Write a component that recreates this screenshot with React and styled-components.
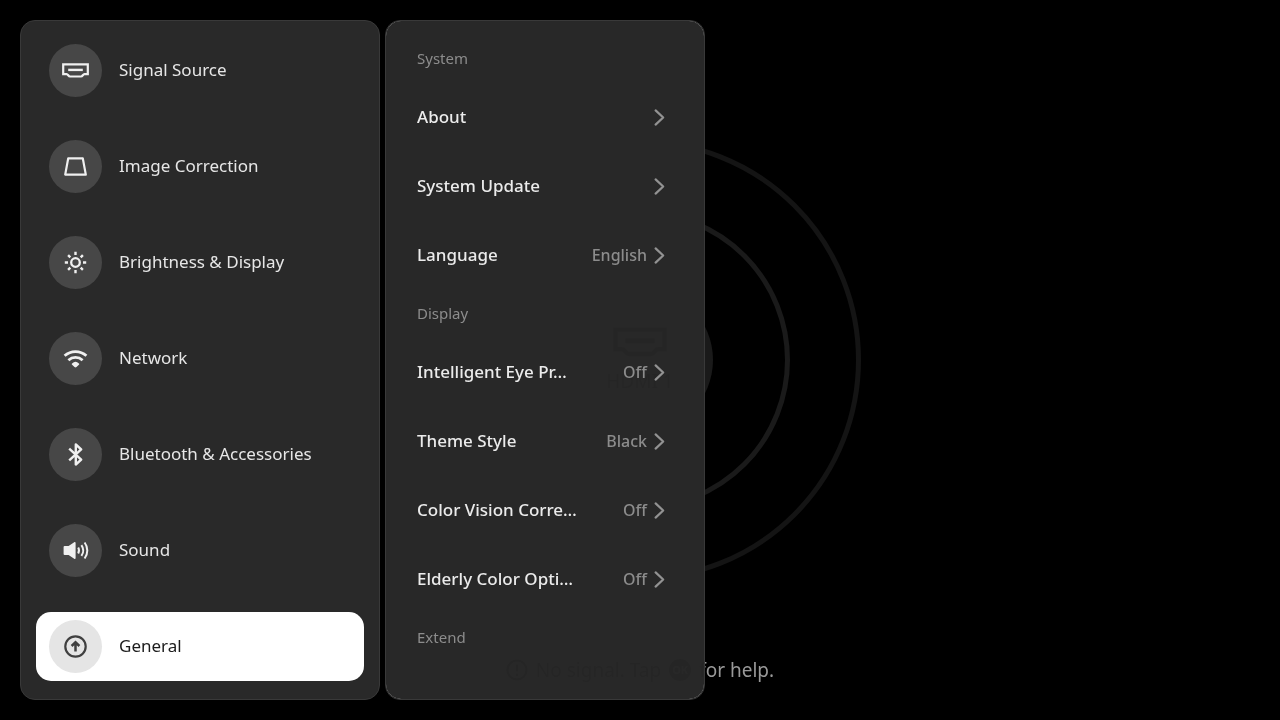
import React, { useState } from "react";
import styled, { createGlobalStyle } from "styled-components";

const GlobalStyle = createGlobalStyle`
  * {
    box-sizing: border-box;
  }
  body {
    margin: 0;
    background: #000;
    font-family: "Noto Sans", "Open Sans", sans-serif;
  }
  button {
    font: inherit;
    border: none;
    padding: 0;
    cursor: pointer;
  }
`;

const Screen = styled.div`
  position: relative;
  min-height: 100vh;
  overflow: hidden;
  background: #000;
`;

/* idle screen behind the settings panels */
const Backdrop = styled.div`
  position: absolute;
  inset: 0;
  display: grid;
  place-items: center;

  > * {
    grid-area: 1 / 1;
  }
`;

const Ring = styled.div`
  width: ${(p) => p.$size}px;
  height: ${(p) => p.$size}px;
  border: 5px solid ${(p) => p.$color};
  border-radius: 50%;
`;

const SourceBadge = styled.div`
  width: 146px;
  height: 146px;
  border-radius: 50%;
  background: #1a1a1a;
  color: #888;
  display: flex;
  flex-direction: column;
  align-items: center;
  justify-content: center;
  gap: 12px;
  font-size: 19px;
  line-height: 24px;
`;

const Hint = styled.p`
  align-self: end;
  display: flex;
  align-items: center;
  gap: 8px;
  margin: 0;
  padding-bottom: 36px;
  font-size: 19px;
  line-height: 28px;
  color: #999;
`;

const OkKey = styled.span`
  width: 22px;
  height: 22px;
  border-radius: 50%;
  background: #999;
  color: #000;
  font-size: 11px;
  font-weight: 700;
  line-height: 22px;
  text-align: center;
`;

const Panels = styled.div`
  position: relative;
  display: flex;
  gap: 5px;
  min-height: 100vh;
  padding: 20px;
`;

const Sidebar = styled.nav`
  flex: 0 1 360px;
  display: flex;
  flex-direction: column;
  gap: 27px;
  padding: 15px 15px 18px;
  background: #292929;
  border: 1px solid #393939;
  border-radius: 15px;
`;

const NavItem = styled.button`
  display: flex;
  align-items: center;
  gap: 17px;
  height: 69px;
  padding: 0 13px;
  border-radius: 15px;
  font-size: 17px;
  text-align: left;
  color: ${(p) => (p.$active ? "#1c1c1c" : "#e6e6e6")};
  background: ${(p) => (p.$active ? "#fff" : "transparent")};
`;

const NavIcon = styled.span`
  display: flex;
  align-items: center;
  justify-content: center;
  flex: none;
  width: 53px;
  height: 53px;
  border-radius: 50%;
  color: ${(p) => (p.$active ? "#404040" : "#f0f0f0")};
  background: ${(p) => (p.$active ? "#e5e5e5" : "#474747")};
`;

const NavLabel = styled.span`
  padding-bottom: 2px;
`;

/* the glass sits just inside the outline so its edge never shows */
const Details = styled.main`
  position: relative;
  z-index: 0;
  flex: 0 1 320px;
  padding: 15px 40px 15px 32px;

  &::before,
  &::after {
    content: "";
    position: absolute;
    z-index: -1;
    border-radius: 15px;
  }
  &::before {
    inset: 1px;
    background: rgba(36, 36, 36, 0.98);
    backdrop-filter: invert(1);
  }
  &::after {
    inset: 0;
    border: 1px solid #393939;
  }
`;

const GroupTitle = styled.h2`
  margin: 0;
  padding-bottom: 2px;
  font-size: 15px;
  font-weight: 400;
  line-height: 46px;
  color: #8c8c8c;
`;

const Row = styled.button`
  display: flex;
  align-items: center;
  width: 100%;
  height: 69px;
  background: transparent;
  text-align: left;
`;

const RowLabel = styled.span`
  flex: 1;
  padding-bottom: 2px;
  white-space: nowrap;
  font-size: 17px;
  font-weight: 500;
  color: #ebebeb;
`;

const RowValue = styled.span`
  margin-right: 6px;
  padding-bottom: 1px;
  font-size: 16px;
  font-weight: 500;
  color: #8c8c8c;
`;

const Svg = ({ w, h, children, scale = 1 }) => (
  <svg
    width={w * scale}
    height={h * scale}
    viewBox={`0 0 ${w} ${h}`}
    fill="none"
    stroke="currentColor"
    strokeWidth="2.2"
    aria-hidden="true"
  >
    {children}
  </svg>
);

const HdmiIcon = ({ scale }) => (
  <Svg w={27} h={15} scale={scale}>
    <path d="M1.2 1.3h24.6v9.8h-3.4c-1.6 0-1.6 2.4-3.4 2.4H8c-1.8 0-1.8-2.4-3.4-2.4H1.2z" />
    <path d="M6.2 6.9h14.6" strokeWidth="2.4" />
  </Svg>
);

const KeystoneIcon = () => (
  <Svg w={23} h={19}>
    <path d="M4.2 1.4h14.6l3 16.2H1.2z" strokeLinejoin="round" />
  </Svg>
);

const SunIcon = () => (
  <Svg w={23} h={23}>
    <circle cx="11.5" cy="11.5" r="4.3" strokeWidth="2.3" />
    <path d="M11.5.8v3.2M11.5 19v3.2M.8 11.5h3.2M19 11.5h3.2" strokeWidth="2.4" />
    <path d="M4.1 4.1l2.2 2.2M16.7 16.7l2.2 2.2M4.1 18.9l2.2-2.2M16.7 6.3l2.2-2.2" strokeWidth="2.4" />
  </Svg>
);

const WifiIcon = () => (
  <Svg w={25} h={19}>
    <path d="M1.6 6.8a16.4 16.4 0 0 1 21.8 0" strokeWidth="2.8" />
    <path d="M5.4 11.2a10.6 10.6 0 0 1 14.2 0" strokeWidth="2.8" />
    <path d="M9.1 14.4a5 5 0 0 1 6.8 0c.5.5.4 1 0 1.4l-2.4 2.2a1.5 1.5 0 0 1-2 0l-2.4-2.2c-.4-.4-.5-.9 0-1.4z" fill="currentColor" stroke="none" />
  </Svg>
);

const BluetoothIcon = () => (
  <Svg w={15} h={25}>
    <path d="M1.2 6.6l12 11-5.4 4.9v-20l5.4 4.9-12 11" strokeWidth="2.4" strokeLinejoin="round" />
  </Svg>
);

const SoundIcon = () => (
  <Svg w={27} h={19}>
    <path d="M2.6 5h4L12.2 1.2c.8-.5 1.4-.2 1.4.7v15.2c0 .9-.6 1.2-1.4.7L6.6 14h-4a1 1 0 0 1-1-1V6a1 1 0 0 1 1-1z" fill="currentColor" stroke="none" />
    <path d="M16.2 6.6a5.8 5.8 0 0 1 0 5.8M19.4 4.1a9.4 9.4 0 0 1 0 10.8M22.6 1.5a13.2 13.2 0 0 1 0 16" strokeWidth="2" />
  </Svg>
);

const UpdateIcon = () => (
  <Svg w={25} h={25}>
    <circle cx="12.5" cy="12.5" r="10.2" strokeWidth="2.2" />
    <path d="M12.5 17.5V8.8M8.6 12l3.9-3.7 3.9 3.7" strokeWidth="2.5" />
  </Svg>
);

const Chevron = () => (
  <Svg w={12} h={19}>
    <path d="M2.6 2.4l7.6 7.1-7.6 7.1" strokeWidth="2.2" strokeLinecap="round" strokeLinejoin="round" stroke="#929292" />
  </Svg>
);

const AlertIcon = () => (
  <Svg w={22} h={22}>
    <circle cx="11" cy="11" r="9.5" />
    <path d="M11 5.5v7M11 14.5v2.4" />
  </Svg>
);

const sections = [
  { name: "Signal Source", Icon: HdmiIcon },
  { name: "Image Correction", Icon: KeystoneIcon },
  { name: "Brightness & Display", Icon: SunIcon },
  { name: "Network", Icon: WifiIcon },
  { name: "Bluetooth & Accessories", Icon: BluetoothIcon },
  { name: "Sound", Icon: SoundIcon },
  { name: "General", Icon: UpdateIcon },
];

const groups = [
  {
    title: "System",
    rows: [
      { label: "About" },
      { label: "System Update" },
      { label: "Language", value: "English" },
    ],
  },
  {
    title: "Display",
    rows: [
      { label: "Intelligent Eye Pr…", value: "Off" },
      { label: "Theme Style", value: "Black" },
      { label: "Color Vision Corre…", value: "Off" },
      { label: "Elderly Color Opti…", value: "Off" },
    ],
  },
  { title: "Extend", rows: [] },
];

export default function App() {
  const [active, setActive] = useState("General");

  return (
    <Screen>
      <GlobalStyle />
      <Backdrop>
        <Ring $size={442} $color="#141414" />
        <Ring $size={300} $color="#1a1a1a" />
        <SourceBadge>
          <HdmiIcon scale={2} />
          HDMI 1
        </SourceBadge>
        <Hint>
          <AlertIcon />
          <span>No signal. Tap</span>
          <OkKey>OK</OkKey>
          <span>for help.</span>
        </Hint>
      </Backdrop>

      <Panels>
        <Sidebar>
          {sections.map(({ name, Icon }) => (
            <NavItem key={name} $active={name === active} onClick={() => setActive(name)}>
              <NavIcon $active={name === active}>
                <Icon />
              </NavIcon>
              <NavLabel>{name}</NavLabel>
            </NavItem>
          ))}
        </Sidebar>

        <Details>
          {groups.map((group) => (
            <section key={group.title}>
              <GroupTitle>{group.title}</GroupTitle>
              {group.rows.map((row) => (
                <Row key={row.label}>
                  <RowLabel>{row.label}</RowLabel>
                  {row.value && <RowValue>{row.value}</RowValue>}
                  <Chevron />
                </Row>
              ))}
            </section>
          ))}
        </Details>
      </Panels>
    </Screen>
  );
}
